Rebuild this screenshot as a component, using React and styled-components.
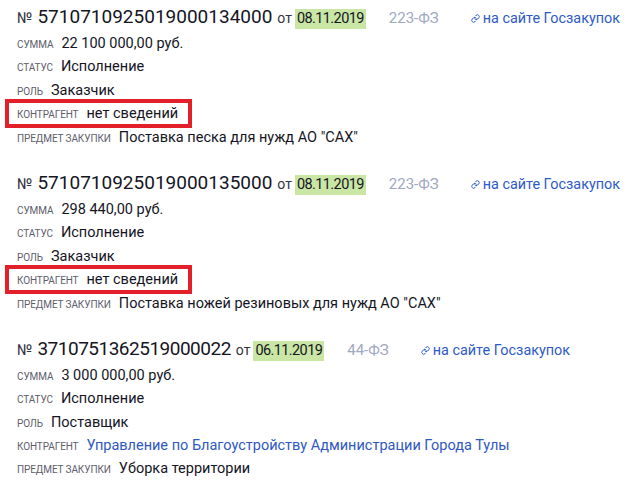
import React from "react";
import styled, { createGlobalStyle } from "styled-components";
import { Link } from "lucide-react";

const Global = createGlobalStyle`
  html, body { margin: 0; padding: 0; background: #ffffff; }
  body { font-family: Roboto, "Noto Sans", "Liberation Sans", sans-serif; color: #1b1b24; }
`;

const Page = styled.div`
  display: flex;
  flex-direction: column;
  gap: 19px;
  padding: 2px 0 0 17px;
`;

const Block = styled.section`
  display: flex;
  flex-direction: column;
`;

const TitleRow = styled.div`
  display: flex;
  align-items: baseline;
  height: 30px;
  line-height: 30px;
  white-space: nowrap;
`;

const NumSign = styled.span`
  font-size: 15px;
  color: #33333d;
  margin-right: 5px;
`;

const Number = styled.span`
  font-size: 19px;
  color: #15151f;
  letter-spacing: ${(p) => p.$spacing || 0}px;
`;

const From = styled.span`
  font-size: 14px;
  color: #33333d;
  margin: 0 3px 0 5px;
`;

const DateMark = styled.span`
  font-size: 14.5px;
  line-height: 20px;
  letter-spacing: -0.6px;
  padding: 0 2px;
  background: #c9e6a5;
  color: #15151f;
`;

const Law = styled.span`
  font-size: 15px;
  color: #a1a8c2;
  margin-left: 23px;
`;

const SiteLink = styled.a`
  display: inline-flex;
  align-items: baseline;
  gap: 3px;
  margin-left: 32px;
  font-size: 14.4px;
  color: #2d5bc8;
  text-decoration: none;
`;

const Row = styled.div`
  position: relative;
  display: inline-flex;
  align-self: flex-start;
  align-items: baseline;
  gap: 8px;
  height: 23.4px;
  line-height: 23.4px;
  white-space: nowrap;

  ${(p) =>
    p.$marked &&
    `
    &::after {
      content: "";
      position: absolute;
      left: -12px;
      right: -14px;
      top: -3px;
      bottom: -2px;
      border: 4px solid #e3202a;
      pointer-events: none;
    }
  `}
`;

const Label = styled.span`
  font-size: 10px;
  text-transform: uppercase;
  color: #5d5d6b;
  letter-spacing: -0.1px;
`;

const Value = styled.span`
  font-size: 14.5px;
  color: ${(p) => (p.$link ? "#2f58c4" : "#15151f")};
`;

const data = [
  {
    num: "5710710925019000134000",
    date: "08.11.2019",
    law: "223-ФЗ",
    sum: "22 100 000,00 руб.",
    status: "Исполнение",
    role: "Заказчик",
    agent: "нет сведений",
    marked: true,
    subject: 'Поставка песка для нужд АО "САХ"',
  },
  {
    num: "5710710925019000135000",
    date: "08.11.2019",
    law: "223-ФЗ",
    sum: "298 440,00 руб.",
    status: "Исполнение",
    role: "Заказчик",
    agent: "нет сведений",
    marked: true,
    subject: 'Поставка ножей резиновых для нужд АО "САХ"',
  },
  {
    num: "3710751362519000022",
    spacing: -0.5,
    date: "06.11.2019",
    law: "44-ФЗ",
    sum: "3 000 000,00 руб.",
    status: "Исполнение",
    role: "Поставщик",
    agent: "Управление по Благоустройству Администрации Города Тулы",
    agentLink: true,
    subject: "Уборка территории",
  },
];

export default function App() {
  return (
    <>
      <Global />
      <Page>
        {data.map((d) => (
          <Block key={d.num}>
            <TitleRow>
              <NumSign>№</NumSign>
              <Number $spacing={d.spacing}>{d.num}</Number>
              <From>от</From>
              <DateMark>{d.date}</DateMark>
              <Law>{d.law}</Law>
              <SiteLink href="#">
                <Link size={9} strokeWidth={2.6} />
                на сайте Госзакупок
              </SiteLink>
            </TitleRow>
            <Row>
              <Label>Сумма</Label>
              <Value>{d.sum}</Value>
            </Row>
            <Row>
              <Label>Статус</Label>
              <Value>{d.status}</Value>
            </Row>
            <Row>
              <Label>Роль</Label>
              <Value>{d.role}</Value>
            </Row>
            <Row $marked={d.marked}>
              <Label>Контрагент</Label>
              <Value $link={d.agentLink}>{d.agent}</Value>
            </Row>
            <Row>
              <Label>Предмет закупки</Label>
              <Value>{d.subject}</Value>
            </Row>
          </Block>
        ))}
      </Page>
    </>
  );
}
